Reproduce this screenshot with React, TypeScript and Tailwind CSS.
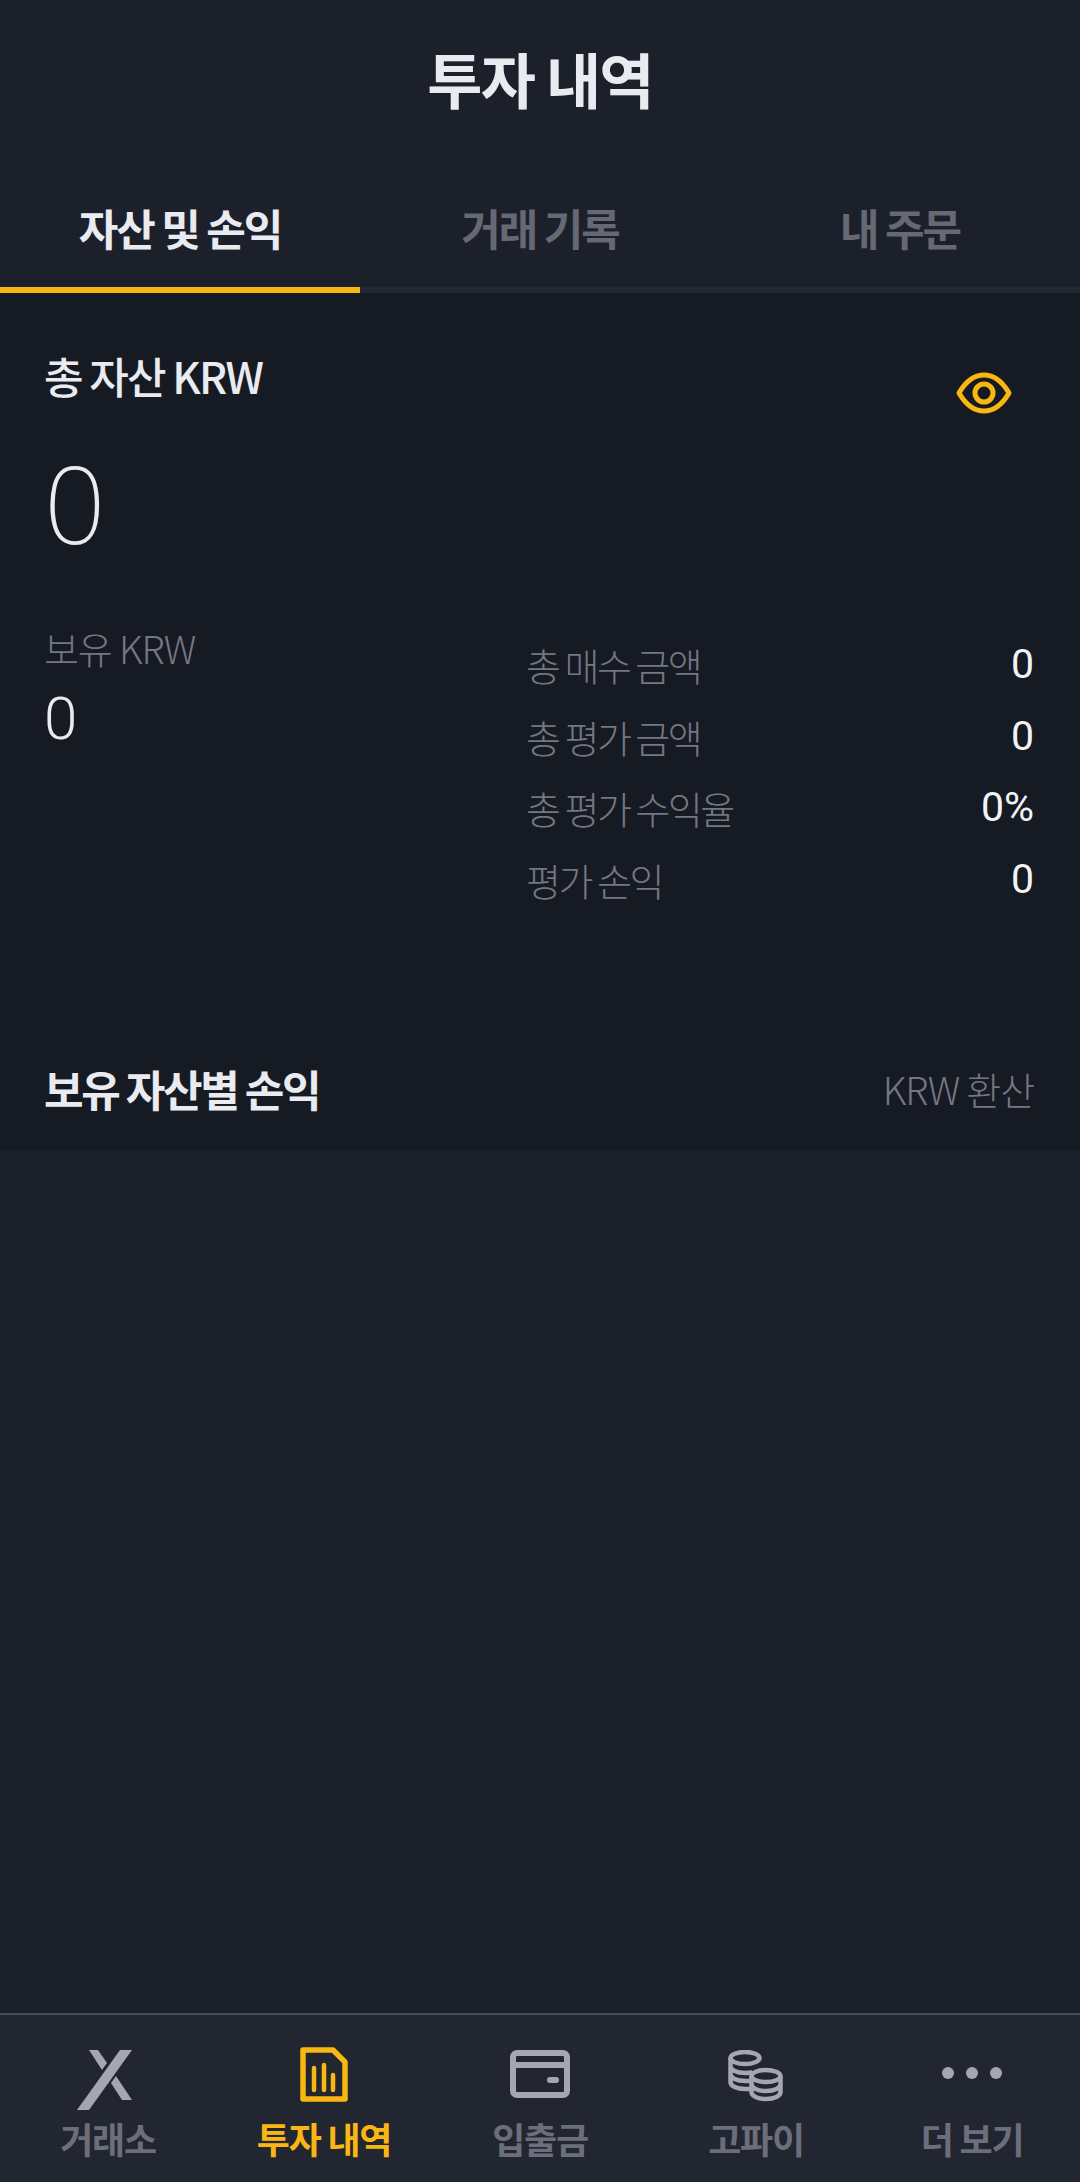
const KR = "font-['Noto_Sans_CJK_KR','Noto_Sans',sans-serif]";

function XLogo() {
  return (
    <svg width="55" height="60" viewBox="0 0 55 60" className="mt-[4px] mr-[7px] block">
      <polygon points="0,60 12,60 55,0 43,0" fill="#a4a7b2" />
      <polygon points="12,0 21,0 30,13 25,20" fill="#a4a7b2" />
      <polygon points="34,33 39,26 55,50 45,50" fill="#a4a7b2" />
    </svg>
  );
}

function ReportIcon() {
  return (
    <svg width="48" height="55" viewBox="0 0 48 55" fill="none" className="mt-[1px] block">
      <path d="M3 3h30l12 12v37H3z" stroke="#f8b712" strokeWidth="5.5" strokeLinejoin="round" />
      <path d="M14 21v22M24 18v25M33 28v15" stroke="#f8b712" strokeWidth="4.5" strokeLinecap="round" />
    </svg>
  );
}

function WalletIcon() {
  return (
    <svg width="60" height="48" viewBox="0 0 60 48" fill="none" className="mt-[4px] block">
      <rect x="3" y="3" width="54" height="42" rx="4" stroke="#a4a7b2" strokeWidth="6" />
      <path d="M2 15h56" stroke="#a4a7b2" strokeWidth="6" />
      <rect x="37" y="27" width="12" height="6" rx="3" fill="#a4a7b2" />
    </svg>
  );
}

function CoinsIcon() {
  return (
    <svg width="55" height="52" viewBox="0 0 55 52" fill="none" stroke="#a4a7b2" strokeWidth="4.5" className="mt-[4px] mr-[2px] block">
      <ellipse cx="17" cy="8" rx="14.5" ry="6" />
      <path d="M2.5 8v24c0 4 6 7 15 7h6M2.5 16c0 4 6 7 15 7 3 0 5 0 7-1M2.5 24c0 4 6 7 15 7h5" />
      <ellipse cx="38" cy="26" rx="14.5" ry="6" fill="#222630" />
      <path d="M23.5 26v16c0 4 6 7 14.5 7s14.5-3 14.5-7V26M23.5 34c0 4 6 7 14.5 7s14.5-3 14.5-7" />
    </svg>
  );
}

function DotsIcon() {
  return (
    <svg width="60" height="12" viewBox="0 0 60 12" fill="#a4a7b2" className="mt-[21px] block">
      <circle cx="6" cy="6" r="6" />
      <circle cx="30" cy="6" r="6" />
      <circle cx="54" cy="6" r="6" />
    </svg>
  );
}

function Row({ label, value }: { label: string; value: string }) {
  return (
    <div className="flex h-[71.5px] items-center justify-between pr-[2px]">
      <span className="text-[38px] font-light tracking-[-0.065em] text-[#747782]">{label}</span>
      <span className="font-['Roboto',sans-serif] text-[41px] text-[#f2f3f6]">{value}</span>
    </div>
  );
}

function NavItem({ icon, label, active }: { icon: React.ReactNode; label: string; active?: boolean }) {
  return (
    <div className="flex flex-col items-center">
      <div className="flex h-[67px] items-start justify-center">{icon}</div>
      <span className={`whitespace-nowrap text-[36px] leading-[50px] font-bold tracking-[-0.035em] ${active ? "text-[#f8b712]" : "text-[#6c6f7b]"}`}>{label}</span>
    </div>
  );
}

export default function App() {
  return (
    <div className={`flex h-[2182px] w-[1080px] flex-col overflow-hidden bg-[#1c202b] ${KR}`}>
      <header className="flex h-[156px] items-center justify-center">
        <h1 className="text-[60px] font-bold tracking-[-0.03em] text-[#e9ebf0]">투자 내역</h1>
      </header>
      <nav className="flex h-[137px] border-b-[6px] border-[#232732] pt-[12px] text-[43px] font-bold tracking-[-0.05em]">
        <div className="relative flex flex-1 items-center justify-center text-[#e9ebf0]">
          자산 및 손익
          <div className="absolute bottom-[-6px] left-0 h-[6px] w-full bg-[#f8b712]" />
        </div>
        <div className="flex flex-1 items-center justify-center text-[#666974]">거래 기록</div>
        <div className="flex flex-1 items-center justify-center text-[#666974]">내 주문</div>
      </nav>
      <section className="h-[857px] bg-[#161a23] px-[44px]">
        <div className="flex items-start justify-between pt-[54px]">
          <h2 className="text-[43px] leading-[56px] font-medium tracking-[-0.045em] text-[#e9ebf0]">총 자산 KRW</h2>
          <svg width="56" height="44" viewBox="0 0 56 44" fill="none" stroke="#f8b712" strokeWidth="5" className="mt-[24px] mr-[24px]">
            <path d="M3 22C10 10 18 4 28 4s18 6 25 18c-7 12-15 18-25 18S10 34 3 22z" strokeLinejoin="round" />
            <circle cx="28" cy="22" r="9" />
          </svg>
        </div>
        <div className="mt-[28px] font-['Noto_Sans',sans-serif] text-[108px] leading-[120px] font-extralight text-[#e9ebf0]">0</div>
        <div className="mt-[60px] flex">
          <div className="w-[482px]">
            <div className="text-[38px] leading-[50px] font-light tracking-[-0.03em] text-[#747782]">보유 KRW</div>
            <div className="mt-[11px] font-['Roboto',sans-serif] text-[60px] leading-[70px] font-light text-[#e9ebf0]">0</div>
          </div>
          <div className="flex-1 pt-[6px]">
            <Row label="총 매수 금액" value="0" />
            <Row label="총 평가 금액" value="0" />
            <Row label="총 평가 수익율" value="0%" />
            <Row label="평가 손익" value="0" />
          </div>
        </div>
        <div className="mt-[143px] flex items-center justify-between">
          <h2 className="text-[43px] leading-[60px] font-bold tracking-[-0.055em] text-[#e9ebf0]">보유 자산별 손익</h2>
          <span className="pr-[2px] text-[38px] font-light tracking-[-0.03em] text-[#747782]">KRW 환산</span>
        </div>
      </section>
      <div className="flex-1" />
      <footer className="grid h-[169px] grid-cols-5 border-t-[2px] border-[#464a55] bg-[#222630] pt-[31px]">
        <NavItem icon={<XLogo />} label="거래소" />
        <NavItem icon={<ReportIcon />} label="투자 내역" active />
        <NavItem icon={<WalletIcon />} label="입출금" />
        <NavItem icon={<CoinsIcon />} label="고파이" />
        <NavItem icon={<DotsIcon />} label="더 보기" />
      </footer>
    </div>
  );
}
